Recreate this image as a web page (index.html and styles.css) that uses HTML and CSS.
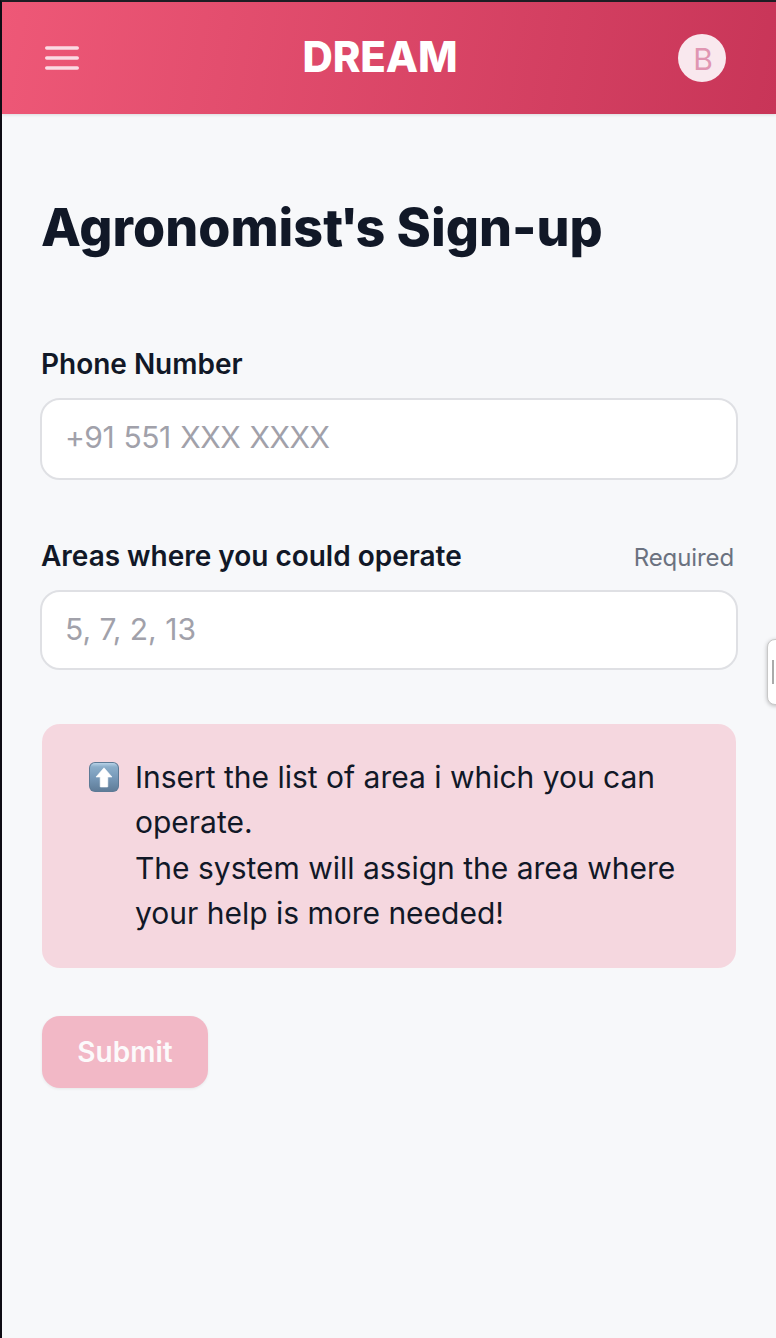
FILE: index.html
```html
<!DOCTYPE html>
<html lang="en">
<head>
<meta charset="utf-8">
<title>DREAM</title>
<link rel="stylesheet" href="styles.css">
</head>
<body>
<div class="app">
  <header class="navbar">
    <svg class="menu" width="48" height="48" viewBox="0 0 48 48" fill="none" stroke="currentColor" stroke-width="3.400" stroke-linecap="round"><path d="M10.700 14h30.600M10.700 24h30.600M10.700 34h30.600"/></svg>
    <div class="brand">DREAM</div>
    <div class="avatar">B</div>
  </header>
  <main class="content">
    <h1 class="title">Agronomis<span class="tight">t'</span>s Sign-up</h1>
    <form class="form">
      <div class="field">
        <div class="label-row"><label class="label" for="phone">Phone Number</label></div>
        <input class="input input-phone" id="phone" placeholder="+91 551 XXX XXXX">
      </div>
      <div class="field">
        <div class="label-row"><label class="label" for="areas">Areas where you could operate</label><span class="hint">Required</span></div>
        <input class="input" id="areas" placeholder="5, 7, 2, 13">
      </div>
      <div class="notice">
        <svg class="notice-icon" width="30" height="30" viewBox="0 0 30 30"><defs><linearGradient id="g" x1="0" y1="0" x2="0" y2="1"><stop offset="0" stop-color="#b9d3e8"/><stop offset="0.140" stop-color="#8caeca"/><stop offset="0.500" stop-color="#789aba"/><stop offset="1" stop-color="#5f7c98"/></linearGradient></defs><rect width="30" height="30" rx="6" fill="#5d7a96"/><rect x="1" y="1" width="28" height="28" rx="5" fill="url(#g)"/><path d="M15 5.800 23 15h-4.200v9.500q0 .5-.5.5h-6.600q-.5 0-.5-.5V15H7z" fill="#fff" stroke="#fff" stroke-width=".6" stroke-linejoin="round"/></svg>
        <p class="notice-text">Insert the list of area i which you can operate.<br>The system will assign the area where your help is more needed!</p>
      </div>
      <button class="submit" type="button">Submit</button>
    </form>
  </main>
  <div class="handle"></div>
</div>
</body>
</html>
```
FILE: styles.css
```css
* { box-sizing: border-box; }
body { margin: 0; font-family: Inter, sans-serif; color: #111827; }
.app { position: relative; height: 1338px; overflow: hidden; background: #f7f8fa; border-top: 2px solid #1d1d23; border-left: 2px solid #0e0c14; }
.navbar { display: flex; align-items: center; justify-content: space-between; height: 112px; padding: 0 50px 0 34px; background: linear-gradient(100deg, #ee5877, #c83558); box-shadow: 0 1px 3px rgba(0,0,0,.12); }
.menu { color: #fbdae3; }
.brand { color: #fff; font-size: 42px; font-weight: 800; line-height: 48px; letter-spacing: -0.1px; margin-left: -2px; padding-bottom: 2px; }
.avatar { width: 48px; height: 48px; border-radius: 50%; background: #f9e8ee; color: #e096b2; font-size: 30px; line-height: 51px; padding-left: 2px; text-align: center; }
.content { padding: 80px 38px 0 38px; }
.title { margin: 0 0 80px 1px; font-size: 52px; line-height: 68px; font-weight: 800; white-space: nowrap; }
.tight { letter-spacing: -3px; }
.field { margin-bottom: 54px; }
.label-row { display: flex; justify-content: space-between; height: 56px; padding: 0 4px 0 1px; line-height: 44px; }
.label { font-size: 28px; font-weight: 600; letter-spacing: -0.020px; }
.hint { font-size: 24px; color: #6b7280; letter-spacing: -0.1px; padding-top: 2px; }
.input { display: block; width: 698px; height: 80px; padding: 0 23px 2px; border: 2px solid #dfe0e4; border-radius: 20px; background: #fff; font: 400 30px Inter, sans-serif; }
.input-phone { height: 82px; padding-bottom: 4px; letter-spacing: -0.500px; word-spacing: 1.500px; }
.input::placeholder { color: #a1a1aa; opacity: 1; }
.notice { display: flex; width: 694px; height: 244px; margin: 54px 0 48px 2px; padding: 31px 46px; border-radius: 18px; background: #f5d7df; }
.notice-icon { margin: 7px 16px 0 1px; flex: none; }
.notice-text { margin: 0; font-size: 30px; line-height: 45.300px; letter-spacing: -0.010px; }
.submit { display: block; width: 166px; height: 72px; margin-left: 2px; border: 0; border-radius: 18px; background: #f2b8c6; color: #fcfafb; font: 600 28px Inter, sans-serif; box-shadow: 0 1px 3px rgba(0,0,0,.07); }
/* Drawer grip along the right edge */
.handle { position: absolute; left: 765px; top: 637px; width: 24px; height: 66px; border: 1px solid #c8c8c8; border-radius: 8px; background: #fff; box-shadow: 0 1px 4px rgba(0,0,0,.25); }
.handle::before { content: ""; display: block; width: 2px; height: 24px; margin: 20px 0 0 4px; background: #aaa; }
```
